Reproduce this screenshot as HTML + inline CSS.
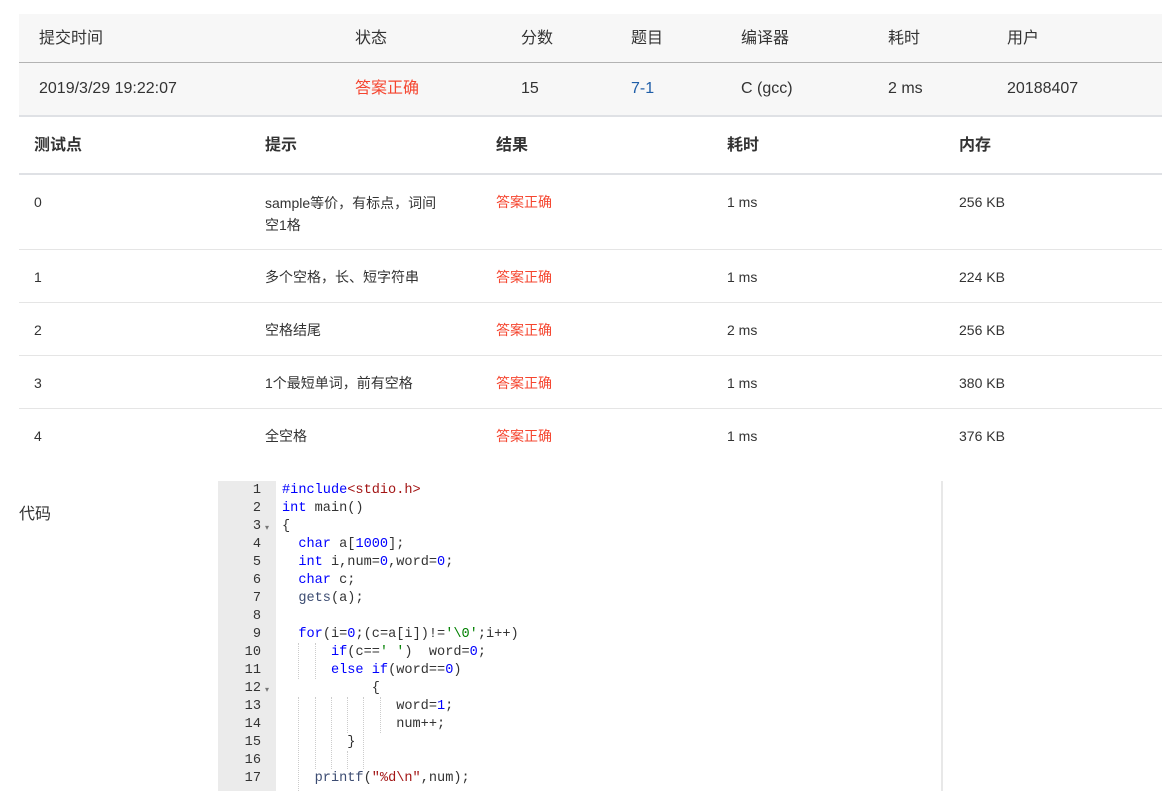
<!DOCTYPE html><html><head><meta charset="utf-8"><style>
body{margin:0;width:1162px;height:791px;overflow:hidden;background:#fff;font-family:"Liberation Sans","Noto Sans CJK SC",sans-serif;color:#333;position:relative}
.a{position:absolute;white-space:nowrap}
.t{font-size:16px;line-height:20px}
.s{font-size:14px;line-height:20px}
.b{font-weight:bold}
.r{color:#f5452f}
.code{position:absolute;left:282px;top:482px;font-family:"Liberation Mono",monospace;font-size:13.6px;line-height:18px;white-space:pre;color:#333}
.gut{position:absolute;left:218px;top:481px;width:58px;height:310px;background:#ebebeb}
.ln{position:absolute;left:218px;top:482px;width:43px;text-align:right;font-family:"Liberation Mono",monospace;font-size:13.6px;line-height:18px;color:#333}
.k{color:#0000ff}.n{color:#0000ff}.str{color:#a31515}.g{color:#008000}.f{color:#3c4c72}
.gd{position:absolute;width:0;border-left:1px dotted #ccc}
</style></head><body>
<div class="a" style="left:19px;top:14px;width:1143px;height:48px;background:#f7f7f7;border-bottom:1px solid #b3b3b3"></div>
<div class="a" style="left:19px;top:63px;width:1143px;height:52px;background:#f7f7f7;border-bottom:2px solid #dfe1e5"></div>
<div class="a t" style="left:39px;top:29px">提交时间</div>
<div class="a t" style="left:355px;top:29px">状态</div>
<div class="a t" style="left:521px;top:29px">分数</div>
<div class="a t" style="left:631px;top:29px">题目</div>
<div class="a t" style="left:741px;top:29px">编译器</div>
<div class="a t" style="left:888px;top:29px">耗时</div>
<div class="a t" style="left:1007px;top:29px">用户</div>
<div class="a t" style="left:39px;top:79px">2019/3/29 19:22:07</div>
<div class="a t r" style="left:355px;top:79px">答案正确</div>
<div class="a t" style="left:521px;top:79px">15</div>
<div class="a t" style="left:631px;top:79px;color:#1f5ea8">7-1</div>
<div class="a t" style="left:741px;top:79px">C (gcc)</div>
<div class="a t" style="left:888px;top:79px">2 ms</div>
<div class="a t" style="left:1007px;top:79px">20188407</div>

<div class="a" style="left:19px;top:173px;width:1143px;height:2px;background:#dfe1e5"></div>
<div class="a t b" style="left:34px;top:136px">测试点</div>
<div class="a t b" style="left:265px;top:136px">提示</div>
<div class="a t b" style="left:496px;top:136px">结果</div>
<div class="a t b" style="left:727px;top:136px">耗时</div>
<div class="a t b" style="left:959px;top:136px">内存</div>

<div class="a s" style="left:34px;top:192px">0</div>
<div class="a s" style="left:265px;top:192px;line-height:22px">sample等价，有标点，词间<br>空1格</div>
<div class="a s r" style="left:496px;top:192px">答案正确</div>
<div class="a s" style="left:727px;top:192px">1 ms</div>
<div class="a s" style="left:959px;top:192px">256 KB</div>
<div class="a" style="left:19px;top:249px;width:1143px;height:1px;background:#e5e5e5"></div>

<div class="a s" style="left:34px;top:267px">1</div>
<div class="a s" style="left:265px;top:267px">多个空格，长、短字符串</div>
<div class="a s r" style="left:496px;top:267px">答案正确</div>
<div class="a s" style="left:727px;top:267px">1 ms</div>
<div class="a s" style="left:959px;top:267px">224 KB</div>
<div class="a" style="left:19px;top:302px;width:1143px;height:1px;background:#e5e5e5"></div>

<div class="a s" style="left:34px;top:320px">2</div>
<div class="a s" style="left:265px;top:320px">空格结尾</div>
<div class="a s r" style="left:496px;top:320px">答案正确</div>
<div class="a s" style="left:727px;top:320px">2 ms</div>
<div class="a s" style="left:959px;top:320px">256 KB</div>
<div class="a" style="left:19px;top:355px;width:1143px;height:1px;background:#e5e5e5"></div>

<div class="a s" style="left:34px;top:373px">3</div>
<div class="a s" style="left:265px;top:373px">1个最短单词，前有空格</div>
<div class="a s r" style="left:496px;top:373px">答案正确</div>
<div class="a s" style="left:727px;top:373px">1 ms</div>
<div class="a s" style="left:959px;top:373px">380 KB</div>
<div class="a" style="left:19px;top:408px;width:1143px;height:1px;background:#e5e5e5"></div>

<div class="a s" style="left:34px;top:426px">4</div>
<div class="a s" style="left:265px;top:426px">全空格</div>
<div class="a s r" style="left:496px;top:426px">答案正确</div>
<div class="a s" style="left:727px;top:426px">1 ms</div>
<div class="a s" style="left:959px;top:426px">376 KB</div>

<div class="a t" style="left:19px;top:505px">代码</div>
<div class="gut"></div>
<div class="a" style="left:941px;top:481px;width:2px;height:310px;background:#e8e8e8"></div>
<div class="ln">1<br>2<br>3<br>4<br>5<br>6<br>7<br>8<br>9<br>10<br>11<br>12<br>13<br>14<br>15<br>16<br>17</div>
<div class="a" style="left:265px;top:523px;font-size:8px;color:#777">▾</div>
<div class="a" style="left:265px;top:685px;font-size:8px;color:#777">▾</div>
<div class="gd" style="left:298px;top:643px;height:36px"></div>
<div class="gd" style="left:315px;top:643px;height:36px"></div>
<div class="gd" style="left:298px;top:697px;height:94px"></div>
<div class="gd" style="left:315px;top:697px;height:72px"></div>
<div class="gd" style="left:331px;top:697px;height:72px"></div>
<div class="gd" style="left:347px;top:697px;height:36px"></div>
<div class="gd" style="left:347px;top:751px;height:18px"></div>
<div class="gd" style="left:363px;top:697px;height:72px"></div>
<div class="gd" style="left:380px;top:697px;height:36px"></div>
<div class="code"><span class="k">#include</span><span class="str">&lt;stdio.h&gt;</span>
<span class="k">int</span> main()
{
  <span class="k">char</span> a[<span class="n">1000</span>];
  <span class="k">int</span> i,num=<span class="n">0</span>,word=<span class="n">0</span>;
  <span class="k">char</span> c;
  <span class="f">gets</span>(a);

  <span class="k">for</span>(i=<span class="n">0</span>;(c=a[i])!=<span class="g">'\0'</span>;i++)
      <span class="k">if</span>(c==<span class="g">' '</span>)  word=<span class="n">0</span>;
      <span class="k">else</span> <span class="k">if</span>(word==<span class="n">0</span>)
           {
              word=<span class="n">1</span>;
              num++;
        }

    <span class="f">printf</span>(<span class="str">"%d\n"</span>,num);</div>
</body></html>
